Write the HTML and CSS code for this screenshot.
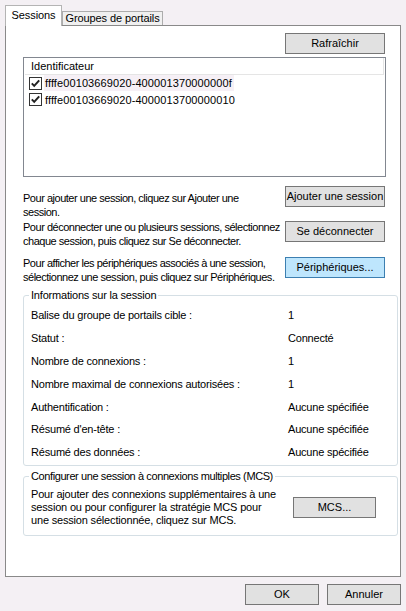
FILE: index.html
```html
<!DOCTYPE html>
<html lang="fr">
<head>
<meta charset="utf-8">
<title>Sessions</title>
<link rel="stylesheet" href="styles.css">
</head>
<body>
<div class="dialog">
  <div class="tabs">
    <div class="tab tab-active">Sessions</div>
    <div class="tab">Groupes de portails</div>
  </div>
  <div class="panel">
    <div class="refresh-row"><button class="btn btn-refresh">Rafraîchir</button></div>
    <div class="listview">
      <div class="lv-header">Identificateur</div>
      <div class="lv-row">
        <svg class="check" width="13" height="13" viewBox="0 0 13 13"><rect x="0.5" y="0.5" width="12" height="12" fill="#fff" stroke="#333"/><path d="M2.8 6.4 L5.2 8.9 L10.2 3.4" fill="none" stroke="#222" stroke-width="2"/></svg>
        <span class="lv-text lv-selected">ffffe00103669020-400001370000000f</span>
      </div>
      <div class="lv-row">
        <svg class="check" width="13" height="13" viewBox="0 0 13 13"><rect x="0.5" y="0.5" width="12" height="12" fill="#fff" stroke="#333"/><path d="M2.8 6.4 L5.2 8.9 L10.2 3.4" fill="none" stroke="#222" stroke-width="2"/></svg>
        <span class="lv-text">ffffe00103669020-4000013700000010</span>
      </div>
    </div>

    <div class="action action-add">
      <p class="action-text">Pour ajouter une session, cliquez sur Ajouter une<br>session.</p>
      <button class="btn btn-action">Ajouter une session</button>
    </div>
    <div class="action action-logout">
      <p class="action-text">Pour déconnecter une ou plusieurs sessions, sélectionnez<br>chaque session, puis cliquez sur Se déconnecter.</p>
      <button class="btn btn-action">Se déconnecter</button>
    </div>
    <div class="action action-devices">
      <p class="action-text">Pour afficher les périphériques associés à une session,<br>sélectionnez une session, puis cliquez sur Périphériques.</p>
      <button class="btn btn-action btn-default">Périphériques...</button>
    </div>

    <fieldset class="group group-info">
      <legend class="legend-info">Informations sur la session</legend>
      <div class="info-grid">
        <span>Balise du groupe de portails cible :</span><span>1</span>
        <span>Statut :</span><span>Connecté</span>
        <span>Nombre de connexions :</span><span>1</span>
        <span>Nombre maximal de connexions autorisées :</span><span>1</span>
        <span>Authentification :</span><span>Aucune spécifiée</span>
        <span>Résumé d'en-tête :</span><span>Aucune spécifiée</span>
        <span>Résumé des données :</span><span>Aucune spécifiée</span>
      </div>
    </fieldset>

    <fieldset class="group group-mcs">
      <legend class="legend-mcs">Configurer une session à connexions multiples (MCS)</legend>
      <div class="mcs-body">
        <p class="mcs-text">Pour ajouter des connexions supplémentaires à une<br>session ou pour configurer la stratégie MCS pour<br>une session sélectionnée, cliquez sur MCS.</p>
        <button class="btn btn-mcs">MCS...</button>
      </div>
    </fieldset>
  </div>
  <div class="footer">
    <button class="btn btn-footer">OK</button>
    <button class="btn btn-footer">Annuler</button>
  </div>
</div>
</body>
</html>
```
FILE: styles.css
```css
* { box-sizing: border-box; }

html, body {
  margin: 0;
  padding: 0;
}

body {
  width: 406px;
  height: 611px;
  overflow: hidden;
  background: #f4f0f4;
  font-family: "Liberation Sans", Arial, sans-serif;
  font-size: 11px;
  color: #000;
}

.dialog {
  padding: 5px 5px 0 5px;
}

/* Tabs */
.tabs {
  display: flex;
  align-items: flex-end;
  height: 20px;
}

.tab {
  height: 14px;
  width: 101px;
  border: 1px solid #acacac;
  border-bottom: 0;
  background: #f0f0f0;
  text-align: center;
  line-height: 13px;
  white-space: nowrap;
  letter-spacing: -0.1px;
}

.tab-active {
  position: relative;
  z-index: 2;
  width: 57px;
  height: 21px;
  margin-bottom: -1px;
  background: #fff;
  border-color: #b4b4b4;
  line-height: 19px;
}

/* Panel */
.panel {
  width: 396px;
  height: 552px;
  border: 1px solid #898989;
  background: #fff;
  padding: 0 2px 0 17px;
}

.refresh-row {
  display: flex;
  justify-content: flex-end;
  padding-top: 7px;
  margin-right: 13px;
}

.btn {
  font-family: "Liberation Sans", Arial, sans-serif;
  font-size: 11px;
  color: #000;
  background: #e1e1e1;
  border: 1px solid #767676;
  border-radius: 0;
  height: 21px;
  padding: 0;
  margin: 0;
  line-height: 19px;
  white-space: nowrap;
}

.btn-refresh { width: 100px; }

/* List view */
.listview {
  margin-top: 3px;
  width: 363px;
  height: 120px;
  border: 1px solid #828790;
  background: #fff;
  padding: 0 1px;
}

.lv-header {
  height: 17px;
  border-bottom: 1px solid #e5e5e5;
  border-right: 1px solid #e5e5e5;
  padding-left: 6px;
  line-height: 16px;
}

.lv-row {
  display: flex;
  align-items: center;
  height: 16.5px;
  padding-left: 4px;
}

.check {
  flex: none;
  display: block;
}

.lv-text {
  margin-left: 2px;
  padding: 0 2px 0 1px;
  line-height: 16px;
  white-space: nowrap;
  letter-spacing: 0.1px;
}

.lv-selected {
  background: #f6f0f6;
}

/* Action rows */
.action {
  display: flex;
  justify-content: space-between;
  align-items: flex-start;
  width: 362px;
}

.action-text {
  margin: 0;
  line-height: 14px;
  white-space: nowrap;
  letter-spacing: -0.48px;
}

.btn-action {
  width: 100px;
  flex: none;
}

.action-add { margin-top: 9px; }
.action-add .action-text { margin-top: 5px; }

.action-logout { margin-top: 0; }
.action-logout .action-text { margin-top: 1px; }
.action-logout .btn-action { margin-top: 2px; }

.action-devices { margin-top: 8px; }
.action-devices .btn-action { margin-top: 1px; }

.btn-default {
  background: #bee6fd;
  border-color: #3c7fb1;
}

/* Group boxes */
.group {
  margin: 0;
  padding: 0;
  min-width: 0;
  border: 1px solid #d5dfe5;
  border-radius: 3px;
}

.group legend {
  margin-left: 5px;
  padding: 0 2px;
  line-height: 13px;
}

.legend-info { letter-spacing: -0.2px; }
.legend-mcs { letter-spacing: -0.4px; }

.group-info { margin-top: 5px; }

.info-grid {
  display: grid;
  grid-template-columns: 257px 1fr;
  grid-auto-rows: 22.8px;
  align-items: center;
  padding: 2px 0 1px 7px;
  white-space: nowrap;
  letter-spacing: -0.2px;
}

.group-mcs { margin-top: 4px; }

.mcs-body {
  display: flex;
  align-items: center;
  padding: 5px 0 8px 7px;
}

.mcs-text {
  margin: 0;
  width: 262px;
  line-height: 13px;
  white-space: nowrap;
  letter-spacing: -0.18px;
}

.btn-mcs {
  width: 83px;
  flex: none;
}

/* Footer */
.footer {
  display: flex;
  justify-content: flex-end;
  gap: 8px;
  margin-top: 7px;
  padding-right: 0;
}

.btn-footer {
  width: 74px;
}
```
